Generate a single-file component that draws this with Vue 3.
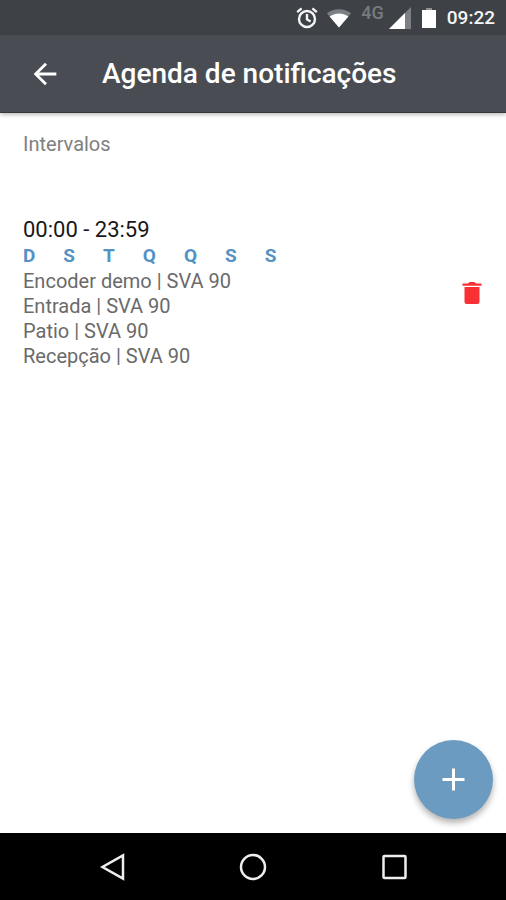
<script setup>
const intervals = [
  {
    time: '00:00 - 23:59',
    days: ['D', 'S', 'T', 'Q', 'Q', 'S', 'S'],
    devices: ['Encoder demo | SVA 90', 'Entrada | SVA 90', 'Patio | SVA 90', 'Recepção | SVA 90'],
  },
]
</script>

<template>
  <div class="screen">
    <div class="status">
      <svg class="alarm" viewBox="0 0 22 22" width="22" height="22" fill="none" stroke="#f4f5f6" stroke-width="2.4">
        <circle cx="11" cy="12" r="8" />
        <path d="M11 7v5.4l3.6 2.2M1.2 5.2 5.6 1.4M20.8 5.2l-4.4-3.8" />
      </svg>
      <svg class="wifi" viewBox="0 0 24 20" width="24" height="20">
        <path d="M0 5.2C7-.2 17-.2 24 5.2L12 19.5z" fill="#7c8084" />
        <path d="M2.6 8.500C8.500 4.600 15.500 4.600 21.400 8.500L12 19.500z" fill="#fff" />
      </svg>
      <span class="network">4G</span>
      <svg class="signal" viewBox="0 0 22 22" width="22" height="22">
        <path d="M22 0v22H0z" fill="#7c8084" />
        <path d="M16 6v16H0z" fill="#fff" />
      </svg>
      <svg class="battery" viewBox="0 0 14 20" width="14" height="20">
        <path d="M0 2h14v18H0z" fill="#fff" />
        <path d="M4 0h6v2h-6z" fill="#8c9094" />
      </svg>
      <time class="clock">09:22</time>
    </div>

    <header class="appbar">
      <button class="back" type="button" aria-label="Voltar">
        <svg viewBox="0 0 24 24" width="34" height="34" fill="#fff">
          <path d="M20 11H7.830l5.590-5.590L12 4l-8 8 8 8 1.410-1.410L7.830 13H20z" />
        </svg>
      </button>
      <h1>Agenda de notificações</h1>
    </header>

    <main class="content">
      <h2>Intervalos</h2>
      <section v-for="item in intervals" :key="item.time" class="interval">
        <div class="details">
          <p class="hours">{{ item.time }}</p>
          <div class="days">
            <span v-for="(day, i) in item.days" :key="i">{{ day }}</span>
          </div>
          <p v-for="device in item.devices" :key="device" class="device">{{ device }}</p>
        </div>
        <button class="delete" type="button" aria-label="Excluir">
          <svg viewBox="0 0 20 24" width="20" height="24" fill="#f93034">
            <path d="M.5 2.500h5.500l1.500-1.500h5l1.500 1.500h5.500v2.200H.5zM2.500 6h15v15q0 2-2 2h-11q-2 0-2-2z" />
          </svg>
        </button>
      </section>
      <button class="add" type="button" aria-label="Adicionar">
        <svg viewBox="0 0 24 24" width="24" height="24" stroke="#fff" stroke-width="3">
          <path d="M11.500 .5v22M.5 11.500h22" />
        </svg>
      </button>
    </main>

    <nav class="navbar">
      <button type="button" aria-label="Voltar">
        <svg viewBox="0 0 28 28" width="28" height="28"><path d="M26 2.500v23L5.500 14z" /></svg>
      </button>
      <button type="button" aria-label="Início">
        <svg viewBox="0 0 28 28" width="28" height="28"><circle cx="14" cy="14" r="12" /></svg>
      </button>
      <button type="button" aria-label="Recentes">
        <svg viewBox="0 0 28 28" width="28" height="28"><rect x="2.500" y="3" width="22" height="22" rx="1" /></svg>
      </button>
    </nav>
  </div>
</template>

<style>
body {
  margin: 0;
}
</style>

<style scoped>
.screen {
  display: flex;
  flex-direction: column;
  min-height: 100vh;
  background: #fff;
  font-family: Roboto, 'Liberation Sans', sans-serif;
}
h1, h2, p {
  margin: 0;
}
button {
  display: flex;
  align-items: center;
  justify-content: center;
  padding: 0;
  border: 0;
  background: none;
  cursor: pointer;
}
svg {
  display: block;
}
.status {
  display: flex;
  align-items: center;
  justify-content: flex-end;
  height: 35px;
  padding-right: 11px;
  background: #3e4246;
}
.wifi {
  margin-left: 9px;
}
.network {
  align-self: flex-start;
  margin: 3px 5px 0 10px;
  color: #777b7f;
  font-size: 18px;
  line-height: 20px;
  font-weight: 500;
}
.battery {
  margin: 0 11px;
}
.clock {
  color: #f4f5f6;
  font-size: 19px;
  font-weight: 500;
}
.appbar {
  position: relative;
  display: flex;
  align-items: center;
  gap: 40px;
  height: 78px;
  padding: 0 28px;
  box-sizing: border-box;
  border-bottom: 1px solid #34383b;
  background: #494d53;
  box-shadow: 0 2px 4px rgba(0, 0, 0, 0.25);
}
h1 {
  color: #fff;
  font-size: 28px;
  font-weight: 500;
  white-space: nowrap;
}
.content {
  flex: 1;
  display: flex;
  flex-direction: column;
  padding: 19px 24px 14px 23px;
}
h2 {
  color: #808080;
  font-size: 20px;
  line-height: 25px;
  font-weight: 400;
}
.interval {
  display: flex;
  align-items: center;
  justify-content: space-between;
  margin-top: 60px;
}
.hours {
  color: #181818;
  font-size: 22px;
  line-height: 26px;
}
.days {
  display: flex;
  gap: 28px;
  color: #5492c4;
  font-size: 19px;
  line-height: 26px;
  font-weight: 700;
}
.device {
  color: #6a6a6a;
  font-size: 20px;
  line-height: 25px;
}
.add {
  align-self: flex-end;
  width: 79px;
  height: 79px;
  margin-top: auto;
  margin-right: -11px;
  border-radius: 50%;
  background: #6b9bc1;
  box-shadow: 0 4px 6px rgba(0, 0, 0, 0.3);
}
.navbar {
  display: grid;
  grid-template-columns: repeat(3, 1fr);
  height: 67px;
  padding: 0 8%;
  background: #000;
}
.navbar svg {
  fill: none;
  stroke: #eee;
  stroke-width: 2.500;
}
</style>
